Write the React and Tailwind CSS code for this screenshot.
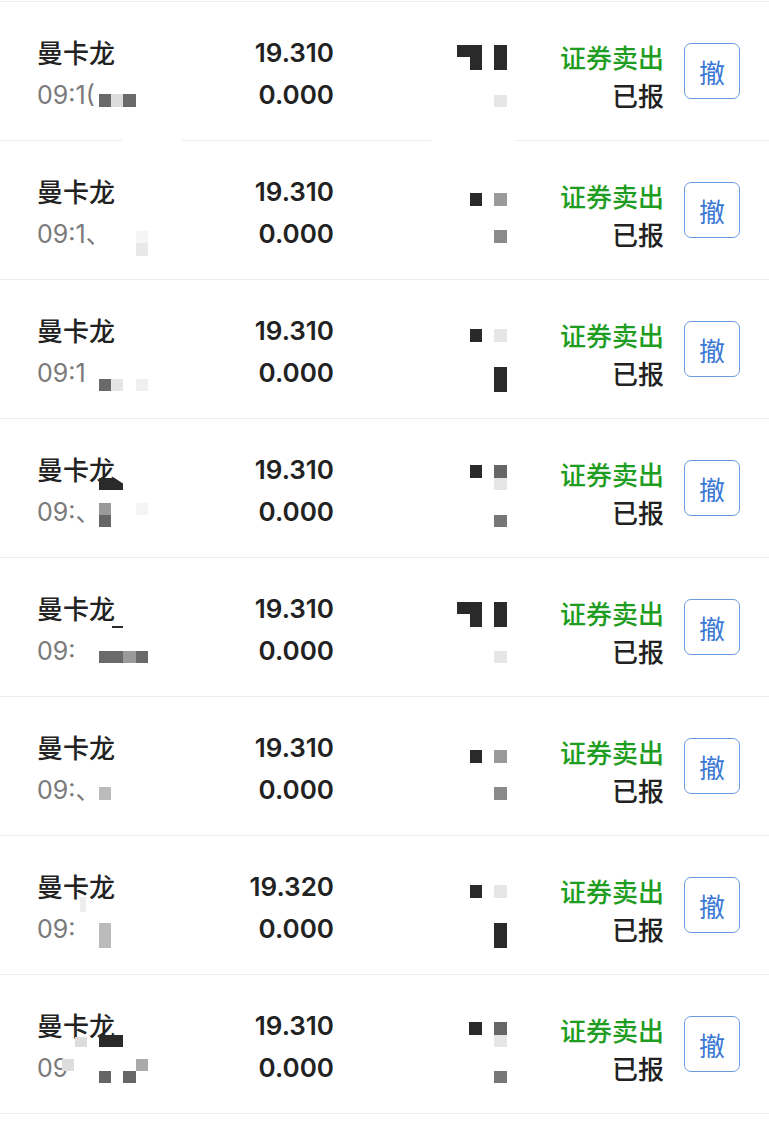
import React from "react";

const rows = [
  {
    price: "19.310",
    time: "09:1(",
    blocks: [
      [457, 43, 25, 12, "#2a2a2a"],
      [470, 55, 12, 13, "#2a2a2a"],
      [494, 43, 13, 25, "#2a2a2a"],
      [494, 93, 13, 12, "#e6e6e6"],
      [99, 92, 12, 13, "#6a6a6a"],
      [111, 92, 12, 13, "#dcdcdc"],
      [123, 92, 13, 13, "#6a6a6a"],
      [122, 136, 60, 3, "#ffffff"],
      [431, 136, 84, 3, "#ffffff"],
    ],
  },
  {
    price: "19.310",
    time: "09:1、",
    blocks: [
      [470, 52, 12, 13, "#2a2a2a"],
      [494, 52, 13, 13, "#9a9a9a"],
      [494, 89, 13, 13, "#8a8a8a"],
      [136, 90, 12, 12, "#f5f5f5"],
      [136, 102, 12, 13, "#e8e8e8"],
    ],
  },
  {
    price: "19.310",
    time: "09:1",
    blocks: [
      [470, 49, 12, 13, "#2a2a2a"],
      [494, 49, 13, 13, "#e6e6e6"],
      [494, 87, 13, 25, "#2a2a2a"],
      [99, 99, 12, 12, "#6a6a6a"],
      [111, 99, 12, 12, "#e5e5e5"],
      [136, 99, 12, 12, "#f0f0f0"],
    ],
  },
  {
    price: "19.310",
    time: "09:、",
    blocks: [
      [470, 46, 12, 13, "#2a2a2a"],
      [494, 46, 13, 13, "#666666"],
      [494, 59, 13, 12, "#e6e6e6"],
      [494, 96, 13, 12, "#777777"],
      [99, 59, 24, 12, "#2a2a2a", true],
      [99, 84, 12, 12, "#9a9a9a"],
      [99, 96, 12, 12, "#666666"],
      [136, 84, 12, 12, "#f5f5f5"],
    ],
  },
  {
    price: "19.310",
    time: "09:",
    blocks: [
      [457, 44, 25, 12, "#2a2a2a"],
      [470, 56, 12, 13, "#2a2a2a"],
      [494, 44, 13, 25, "#2a2a2a"],
      [494, 93, 13, 12, "#e6e6e6"],
      [99, 93, 24, 12, "#6a6a6a"],
      [123, 93, 13, 12, "#9a9a9a"],
      [136, 93, 12, 12, "#6a6a6a"],
      [112, 68, 11, 2, "#2a2a2a"],
    ],
  },
  {
    price: "19.310",
    time: "09:、",
    blocks: [
      [470, 53, 12, 13, "#2a2a2a"],
      [494, 53, 13, 13, "#9a9a9a"],
      [494, 90, 13, 13, "#8a8a8a"],
      [99, 90, 12, 13, "#bbbbbb"],
    ],
  },
  {
    price: "19.320",
    time: "09:",
    blocks: [
      [470, 49, 12, 13, "#2a2a2a"],
      [494, 49, 13, 13, "#e6e6e6"],
      [494, 87, 13, 25, "#2a2a2a"],
      [99, 87, 12, 25, "#bbbbbb"],
      [80, 61, 6, 15, "#eeeeee"],
    ],
  },
  {
    price: "19.310",
    time: "09",
    blocks: [
      [469, 47, 13, 13, "#2a2a2a"],
      [494, 47, 13, 13, "#666666"],
      [494, 60, 13, 12, "#e6e6e6"],
      [494, 96, 13, 12, "#777777"],
      [99, 60, 24, 12, "#2a2a2a"],
      [75, 62, 12, 10, "#dddddd"],
      [62, 84, 12, 12, "#dddddd"],
      [99, 96, 12, 12, "#666666"],
      [123, 96, 13, 12, "#666666"],
      [136, 84, 12, 12, "#aaaaaa"],
    ],
  },
];

const cjk = { fontFamily: '"Noto Sans CJK SC", "Noto Sans", sans-serif' };
const num = { fontFamily: 'Inter, "Noto Sans CJK SC", sans-serif' };

function Row({ r }) {
  return (
    <div className="relative flex h-[139px] border-b border-[#ededed]">
      <div className="flex w-[200px] flex-col gap-[3px] pl-[37px] pt-[30px]">
        <div className="h-[40px] text-[26px] font-medium leading-[40px] text-[#222222]" style={cjk}>
          曼卡龙
        </div>
        <div className="h-[40px] text-[25px] leading-[40px] text-[#7a7a7a]" style={num}>
          {r.time}
        </div>
      </div>
      <div className="flex w-[134px] flex-col items-end gap-[2px] pt-[31px]" style={num}>
        <div className="h-[40px] text-[26px] font-semibold leading-[40px] text-[#222222]">{r.price}</div>
        <div className="h-[40px] text-[26px] font-semibold leading-[40px] text-[#222222]">0.000</div>
      </div>
      <div className="flex w-[330px] flex-col items-end gap-[2px] pt-[37px]" style={cjk}>
        <div className="h-[36px] text-[26px] font-medium leading-[36px] text-[#1f9d22]">证券卖出</div>
        <div className="h-[36px] text-[26px] font-medium leading-[36px] text-[#222222]">已报</div>
      </div>
      <div className="ml-[20px] mt-[41px]">
        <div
          className="flex h-[56px] w-[56px] items-center justify-center rounded-[7px] border-[1.5px] border-[#6b9be0] text-[26px] text-[#3a78d6]"
          style={cjk}
        >
          撤
        </div>
      </div>
      {r.blocks.map(([x, y, w, h, c, slant], i) => (
        <div
          key={i}
          className="absolute"
          style={{
            left: x,
            top: y,
            width: w,
            height: h,
            background: c,
            clipPath: slant ? "polygon(0 0, 65% 0, 100% 45%, 100% 100%, 0 100%)" : undefined,
          }}
        />
      ))}
    </div>
  );
}

export default function App() {
  return (
    <div className="h-[1124px] w-[769px] overflow-hidden bg-white">
      <div className="mt-[1px] border-t border-[#ededed]">
        {rows.map((r, i) => (
          <Row key={i} r={r} />
        ))}
      </div>
    </div>
  );
}
